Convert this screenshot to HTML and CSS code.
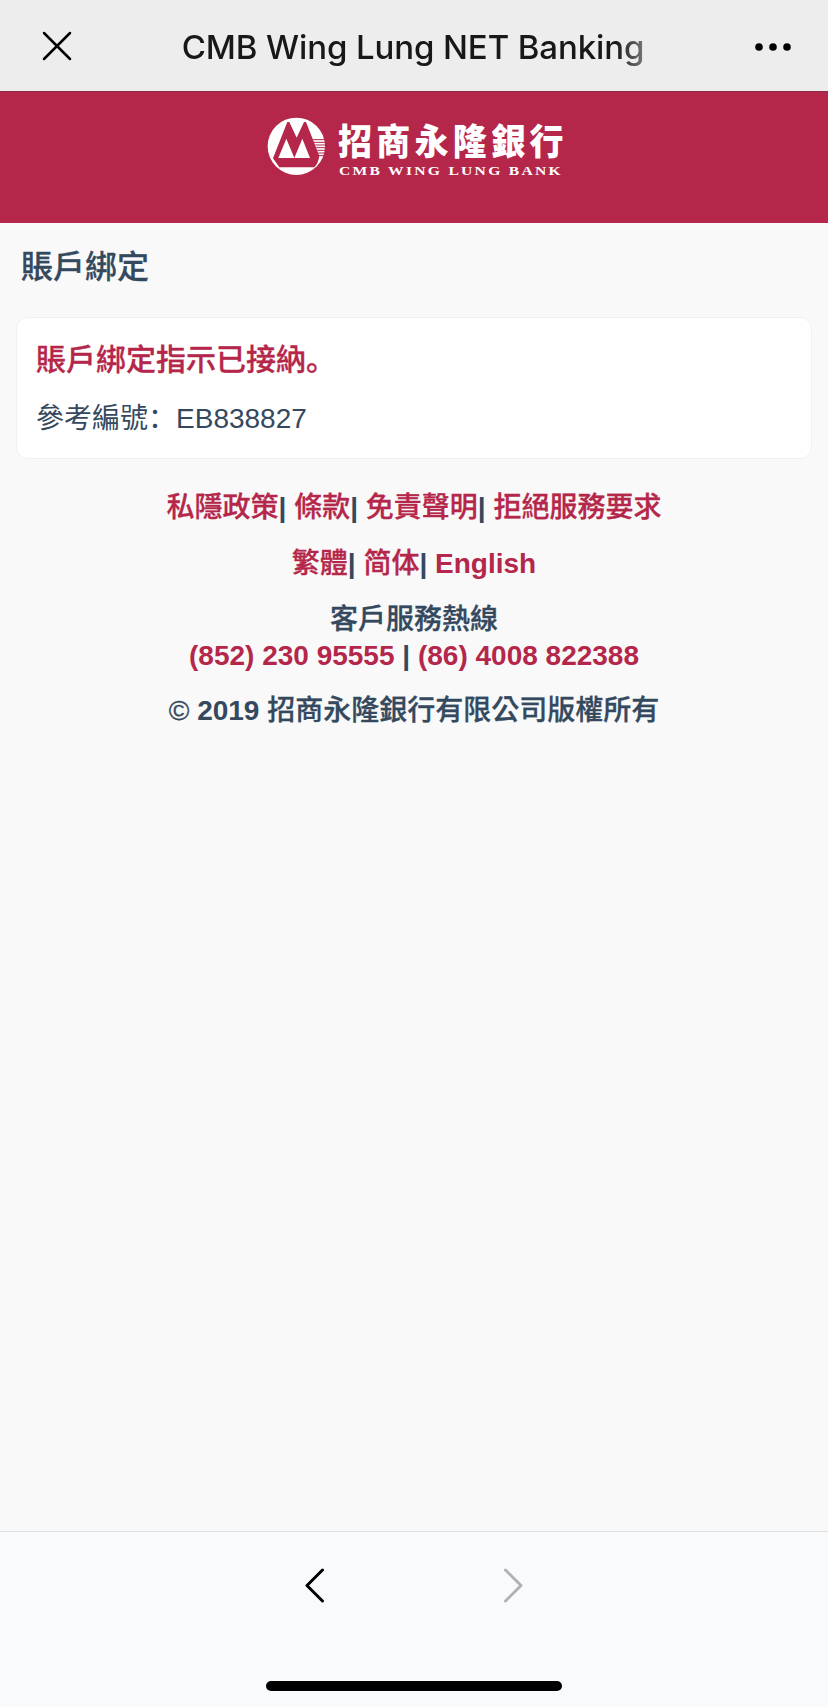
FILE: index.html
```html
<!DOCTYPE html>
<html lang="zh-Hant">
<head>
    <meta charset="UTF-8">
    <meta name="viewport" content="width=device-width, initial-scale=1.0">
    <title>CMB Wing Lung NET Banking</title>
    <link rel="stylesheet" href="styles.css">
</head>
<body>
    <div class="topbar">
        <svg class="icon-close" width="30" height="30" viewBox="0 0 30 30">
            <path d="M2 2L28 28M28 2L2 28"/>
        </svg>
        <div class="topbar-title">CMB Wing Lung NET Banking</div>
        <svg class="icon-more" width="38" height="8" viewBox="0 0 38 8">
            <circle cx="5" cy="4" r="3.8"/>
            <circle cx="19" cy="4" r="3.8"/>
            <circle cx="33" cy="4" r="3.8"/>
        </svg>
    </div>

    <header class="header">
        <svg class="logo" width="300" height="60" viewBox="0 0 300 60">
            <g transform="translate(-2 -2) scale(.3333)">
                <circle cx="94" cy="94" r="86"/>
                <path class="logo-m" d="M67 21H73L95 68L117 21H123L163 122Q160 145 148 157H43L24 130Z"/>
                <path d="M64 71L88 129H40ZM112 71L135 129H88Z"/>
                <path class="logo-lines" d="M144 74H182M147 82H182M151 90H182M154 98H182M157 106H181M160 114H180M162 122H178"/>
            </g>
            <text class="logo-zh" transform="translate(71 38) scale(1 1.08)">招商永隆銀行</text>
            <text class="logo-en" transform="translate(72 57.500) scale(1.2 1)">CMB WING LUNG BANK</text>
        </svg>
    </header>

    <main class="content">
        <h1>賬戶綁定</h1>
        <div class="card">
            <h2>賬戶綁定指示已接納<span lang="zh-Hans">。</span></h2>
            <p>參考編號<span lang="zh-Hans">：</span>EB838827</p>
        </div>
    </main>

    <footer class="footer">
        <p><a href="#">私隱政策</a>| <a href="#">條款</a>| <a href="#">免責聲明</a>| <a href="#">拒絕服務要求</a></p>
        <p><a href="#">繁體</a>| <a href="#">简体</a>| <a class="latin" href="#">English</a></p>
        <p class="hotline"><span>客戶服務熱線</span><br><a class="latin" href="#">(852) 230 95555</a> | <a class="latin" href="#">(86) 4008 822388</a></p>
        <p><span>©</span> 2019 <span>招商永隆銀行有限公司版權所有</span></p>
    </footer>

    <nav class="bottombar">
        <div class="nav-buttons">
            <svg width="20" height="36" viewBox="0 0 20 36"><path d="M17.500 2L2 17.500L17.500 33"/></svg>
            <svg class="disabled" width="20" height="36" viewBox="0 0 20 36"><path d="M2.500 2L18 17.500L2.500 33"/></svg>
        </div>
        <div class="home-indicator"></div>
    </nav>
</body>
</html>
```
FILE: styles.css
```css
* {
    box-sizing: border-box;
}
body {
    font-family: "Liberation Sans", "Noto Sans CJK SC", sans-serif;
    background-color: #f9f9f9;
    color: #34495e;
    margin: 0;
    min-height: 100vh;
    display: flex;
    flex-direction: column;
}
.topbar {
    height: 91px;
    padding: 3px 36px 0 42px;
    background-color: #ededed;
    display: flex;
    align-items: center;
    justify-content: space-between;
}
.topbar-title {
    font-family: Inter, sans-serif;
    font-size: 33px;
    line-height: 40px;
    font-weight: 450;
    letter-spacing: -0.12px;
    white-space: nowrap;
    background: linear-gradient(to right, #181818 94%, #777);
    background-clip: text;
    -webkit-background-clip: text;
    color: transparent;
}
.icon-close {
    margin-top: -2px;
    fill: none;
    stroke: #000;
    stroke-width: 2.5;
    stroke-linecap: round;
}
.header {
    height: 132px;
    padding: 25px 0 0 6px;
    background-color: #b5274a;
    border-top: 1px solid #8f2c47;
}
.logo {
    display: block;
    margin: 0 auto;
    fill: #fff;
    overflow: visible;
}
.logo-m {
    fill: #b5274a;
}
.logo-lines {
    stroke: #b5274a;
    stroke-width: 3;
}
.logo-zh {
    font-family: "Noto Sans CJK TC", sans-serif;
    font-size: 34px;
    font-weight: 900;
    letter-spacing: 4.3px;
}
.logo-en {
    font-family: "Liberation Serif", serif;
    font-size: 13px;
    font-weight: bold;
    letter-spacing: 1.9px;
}
.content {
    padding: 0 16px;
}
h1,
h2,
.footer a,
.footer span {
    font-weight: 500;
    -webkit-text-stroke: 0.3px;
}
h1 {
    margin: 21px 0 27px;
    padding-left: 5px;
    font-size: 32px;
    line-height: 46px;
}
.card {
    height: 142px;
    padding: 21px 19px;
    background-color: #fff;
    border: 1px solid #f0f0f0;
    border-radius: 12px;
}
h2 {
    margin: 0 0 20px;
    color: #b5274a;
    font-size: 30px;
    line-height: 42px;
}
.card p {
    margin: 0;
    font-size: 28px;
    line-height: 36px;
}
.footer {
    padding-top: 31px;
    text-align: center;
    font-size: 28px;
    line-height: 36px;
    font-weight: bold;
}
.footer p {
    margin: 0 0 20px;
}
.footer a {
    color: #b5274a;
    text-decoration: none;
}
.footer .latin {
    font-weight: bold;
    -webkit-text-stroke: 0;
}
.footer .hotline {
    margin-bottom: 19px;
}
.bottombar {
    height: 176px;
    margin-top: auto;
    padding-top: 36px;
    background-color: #f9fafc;
    border-top: 1px solid #dcdfe2;
}
.nav-buttons {
    display: flex;
    justify-content: center;
    gap: 178px;
}
.nav-buttons svg {
    fill: none;
    stroke: #000;
    stroke-width: 3;
    stroke-linecap: round;
    stroke-linejoin: round;
}
.nav-buttons .disabled {
    stroke: #b2b2b2;
}
.home-indicator {
    width: 296px;
    height: 10px;
    margin: 77px auto 0;
    border-radius: 5px;
    background-color: #000;
}
```
